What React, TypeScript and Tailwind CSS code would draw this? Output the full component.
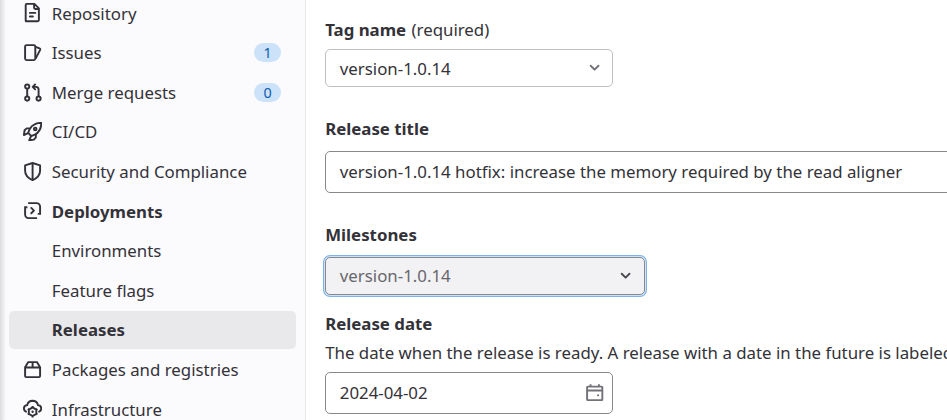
import type { ReactNode } from 'react';

function Icon({ children, className = '' }: { children: ReactNode; className?: string }) {
  return (
    <svg
      viewBox="0 0 16 16"
      className={`h-[19.2px] w-[19.2px] shrink-0 ${className}`}
      fill="none"
      stroke="currentColor"
      strokeWidth="1.6"
    >
      {children}
    </svg>
  );
}

const icons = {
  repository: (
    <Icon>
      <path d="M3.25.75H9.5l3.75 3.75v9.75a1 1 0 0 1-1 1h-9.5a.5.5 0 0 1-.5-.5v-13a1 1 0 0 1 1-1z" strokeLinejoin="round" />
      <path d="M9.25 1v3a1 1 0 0 0 1 1h3" />
      <path d="M5.75 8.25h4.5M5.75 11.25h2.5" strokeLinecap="round" />
    </Icon>
  ),
  issues: (
    <Icon>
      <rect x="1.75" y="1.75" width="8.5" height="12.5" rx="1.25" />
      <path d="M10.5 3.2l3.3 1.3a.9.9 0 0 1 .5 1.2L10.5 13" strokeLinejoin="round" />
    </Icon>
  ),
  merge: (
    <Icon>
      <circle cx="3.5" cy="3" r="1.75" />
      <circle cx="3.5" cy="13" r="1.75" />
      <circle cx="13" cy="13" r="1.75" />
      <path d="M3.5 4.75v6.5M13 11.25V5.5a2.25 2.25 0 0 0-2.25-2.25H8.5" />
      <path d="M10.1 1.2L8.1 3.25l2 2.05" strokeLinecap="round" strokeLinejoin="round" />
    </Icon>
  ),
  rocket: (
    <Icon>
      <path d="M15.25.75c-4.6 0-7.4 1.5-9.6 5L4.3 9.1l2.6 2.6 3.4-1.35c3.5-2.2 5-5 4.95-9.6z" strokeLinejoin="round" />
      <path d="M5.6 5.3H3.1L1.3 6.9.75 10.9l3.4-1.6M10.7 10.2v2.7l-1.6 1.8-3.9.55 1.5-3.4" strokeLinejoin="round" />
      <circle cx="10.2" cy="5.8" r="1.1" />
    </Icon>
  ),
  shield: (
    <Icon>
      <path d="M8 .85l6.25 2v4.4c0 3.2-2.2 6-6.25 7.9-4.05-1.9-6.25-4.7-6.25-7.9v-4.4z" strokeLinejoin="round" />
      <path d="M8 1v14" />
    </Icon>
  ),
  deployments: (
    <Icon>
      <path d="M4.25 1.75h7a3 3 0 0 1 3 3v6h-1.9M11.75 14.25h-7a3 3 0 0 1-3-3v-6h1.9" />
      <path d="M6.9 5.75L9.1 8l-2.2 2.25" strokeLinecap="round" strokeLinejoin="round" />
    </Icon>
  ),
  packages: (
    <Icon>
      <path d="M1.75 6L4.4 1.75h7.2L14.25 6v7.25a1 1 0 0 1-1 1H2.75a1 1 0 0 1-1-1zM1.75 6.25h12.5M8 1.75v4.5" strokeLinejoin="round" />
    </Icon>
  ),
  infrastructure: (
    <Icon>
      <path d="M2.5 10.6A2.9 2.9 0 0 1 .75 8 2.9 2.9 0 0 1 3.5 5.1 4.7 4.7 0 0 1 8 1.5a4.7 4.7 0 0 1 4.5 3.6A2.9 2.9 0 0 1 15.25 8a2.9 2.9 0 0 1-1.75 2.6" strokeLinecap="round" />
      <path d="M8 7l3.1 1.8v3.6L8 14.2l-3.1-1.8V8.8z" strokeLinejoin="round" />
      <circle cx="8" cy="10.6" r="1" fill="currentColor" stroke="none" />
      <path d="M8 5.8v1M8 14.4v1M4.8 8.8L4 8.3M12 8.3l-.8.5M4.8 12.4l-.8.5M12 12.9l-.8-.5" />
    </Icon>
  ),
};

type Item = { label: string; icon?: ReactNode; count?: number; bold?: boolean; active?: boolean };

const items: Item[] = [
  { label: 'Repository', icon: icons.repository },
  { label: 'Issues', icon: icons.issues, count: 1 },
  { label: 'Merge requests', icon: icons.merge, count: 0 },
  { label: 'CI/CD', icon: icons.rocket },
  { label: 'Security and Compliance', icon: icons.shield },
  { label: 'Deployments', icon: icons.deployments, bold: true },
  { label: 'Environments' },
  { label: 'Feature flags' },
  { label: 'Releases', bold: true, active: true },
  { label: 'Packages and registries', icon: icons.packages },
  { label: 'Infrastructure', icon: icons.infrastructure },
];

function NavItem({ label, icon, count, bold, active }: Item) {
  return (
    <li
      className={`flex h-[38.4px] shrink-0 items-center rounded-[5px] pr-[15px] pl-[14px] ${active ? 'bg-[#e9e9eb]' : ''} ${bold ? 'font-bold' : ''}`}
    >
      <span className="mr-[9.6px] flex w-[19.2px] pb-[0.8px]">{icon}</span>
      <span className="grow pt-[0.65px]">{label}</span>
      {count !== undefined && (
        <span className="flex h-[19px] w-[27px] items-center justify-center rounded-full bg-[#cbe2f9] pt-[0.8px] text-[14.4px] text-[#0b5cad]">
          {count}
        </span>
      )}
    </li>
  );
}

function Chevron({ className }: { className: string }) {
  return (
    <Icon className={className}>
      <path d="M4.75 6.5L8 9.75l3.25-3.25" strokeLinecap="round" strokeLinejoin="round" />
    </Icon>
  );
}

export default function App() {
  return (
    <div className="flex h-[420px] w-[947px] overflow-hidden bg-white font-['Noto_Sans',sans-serif] text-[16.83px] leading-6 whitespace-nowrap text-[#333238]">
      <nav className="flex h-full w-[306px] shrink-0 border-r border-[#e7e7ea] bg-[#fbfafd]">
        <div className="w-[6px] shrink-0 bg-linear-to-r from-[#dcdbde] to-[#fbfafd]" />
        <ul className="-mt-[5.8px] ml-[3px] flex w-[287px] flex-col gap-[1.2px]">
          {items.map((item) => (
            <NavItem key={item.label} {...item} />
          ))}
        </ul>
      </nav>
      <main className="flex min-w-0 grow flex-col items-start pt-[18px] pl-[19.2px]">
        <div className="flex gap-[5.4px]">
          <span className="font-bold">Tag name</span>
          <span>(required)</span>
        </div>
        <div className="mt-[7px] flex h-[38px] w-[288px] items-center justify-between rounded-[5px] border border-[#bfbfc3] pr-[8px] pl-[13.6px]">
          <span className="pt-[2px]">version-1.0.14</span>
          <Chevron className="text-[#737278]" />
        </div>
        <div className="mt-[30px] font-bold">Release title</div>
        <div className="mt-[10px] flex h-[42px] w-[700px] items-center rounded-[5px] border border-[#89888d] pl-[13.6px]">
          version-1.0.14 hotfix: increase the memory required by the read aligner
        </div>
        <div className="mt-[30px] font-bold">Milestones</div>
        <div className="mt-[10px] flex h-[38px] w-[320px] items-center justify-between rounded-[5px] border border-[#89888d] bg-[#f2f1f4] pr-[9px] pl-[13.6px] text-[#68676d] shadow-[0_0_0_1px_#cbe2f9,0_0_0_2px_#7db3ea]">
          <span>version-1.0.14</span>
          <Chevron className="text-[#4c4b51]" />
        </div>
        <div className="mt-[17px] font-bold">Release date</div>
        <div className="mt-[5px]">The date when the release is ready. A release with a date in the future is labeled</div>
        <div className="mt-[7px] flex h-[42px] w-[288px] shrink-0 items-center justify-between rounded-[5px] border border-[#89888d] pr-[8px] pl-[13.6px]">
          <span>2024-04-02</span>
          <Icon className="text-[#737278]">
            <rect x="1.75" y="3" width="12.7" height="11.25" rx=".5" />
            <path d="M2 6.25h12.2M4.6 1v2.2M11.6 1v2.2" />
            <circle cx="10.9" cy="10.2" r=".9" fill="currentColor" stroke="none" />
          </Icon>
        </div>
      </main>
    </div>
  );
}
